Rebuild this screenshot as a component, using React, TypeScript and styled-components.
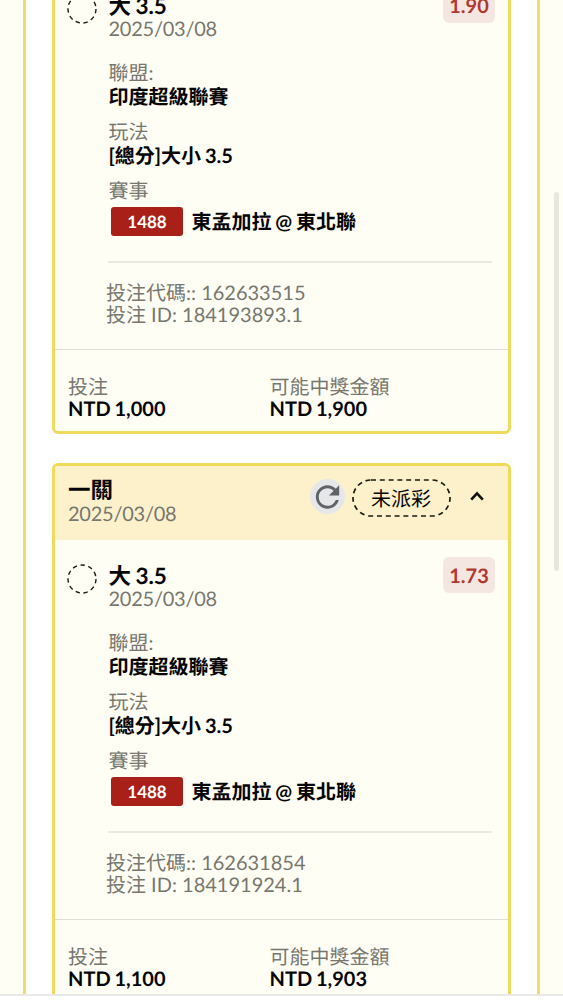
import React from "react";
import styled, { createGlobalStyle } from "styled-components";

const GlobalStyle = createGlobalStyle`
  * { box-sizing: border-box; }
  body {
    margin: 0;
    background: #fff;
    overflow: hidden;
    font-family: Lato, "Noto Sans CJK TC", sans-serif;
    font-size: 20px;
    color: #050505;
    text-rendering: geometricPrecision;
  }
`;

const Page = styled.div`
  height: 1000px;
  background: #fff;
`;

const ScrollArea = styled.main`
  position: relative;
  height: 996px;
  overflow: hidden;
  padding: 0 23px;
  background: #fffef5;
  border-bottom: 2px solid #e9e9e9;
`;

const ScrollThumb = styled.div`
  position: absolute;
  top: 192px;
  right: 4px;
  width: 5px;
  height: 379px;
  border-radius: 3px;
  background: #e7e7e0;
`;

const Frame = styled.div`
  height: 100%;
  padding: 0 26px;
  background: #fff;
  border: solid #f0dc68;
  border-width: 0 3px;
  overflow: hidden;
`;

const TicketList = styled.div`
  display: flex;
  flex-direction: column;
  gap: 29px;
  margin-top: -33px;
`;

const Ticket = styled.article`
  flex: none;
  border: 3px solid #f0da5c;
  border-radius: 6px;
  background: #fffef5;
  overflow: hidden;
`;

const TicketHeader = styled.header`
  display: flex;
  height: 74px;
  padding: 12px 24px 0 13px;
  background: #fdf1cc;
`;

const HeaderTitle = styled.div`
  flex: 1;
`;

const HeaderActions = styled.div`
  display: flex;
  align-items: center;
  height: 38px;
  margin-top: 1px;
`;

const RefreshButton = styled.button`
  display: flex;
  align-items: center;
  justify-content: center;
  width: 35px;
  height: 35px;
  padding: 0;
  margin: -3px 7px 0 0;
  border: 0;
  border-radius: 50%;
  background: #e6e7e8;
`;

const PillOutline = styled.svg`
  display: block;
`;

const StatusPill = styled.span`
  display: grid;
  width: 99px;
  height: 38px;
  > * { grid-area: 1 / 1; }
`;

const StatusText = styled.span`
  align-self: center;
  padding: 3px 1px 0 0;
  text-align: center;
  line-height: 25px;
`;

const ChevronBox = styled.span`
  display: flex;
  margin: -4px 0 0 19px;
`;

const Strong = styled.div<{ $lh?: number }>`
  font-weight: 700;
  line-height: ${(p) => p.$lh ?? 25}px;
  word-spacing: -1px;
`;

const Title = styled(Strong)`
  font-size: 22.5px;
`;

const Muted = styled.div<{ $lh?: number }>`
  color: #77776f;
  line-height: ${(p) => p.$lh ?? 24}px;
`;

const DateText = styled(Muted)`
  letter-spacing: -0.25px;
`;

const Selection = styled.section`
  display: flex;
  padding: 23px 13px 0;
`;

const PendingMark = styled.svg`
  flex: none;
  width: 30px;
  height: 30px;
  margin: 0.5px 11.5px 0 -1px;
`;

const Details = styled.div`
  flex: 1;
`;

const Odds = styled.span`
  align-self: flex-start;
  width: 52px;
  margin-top: -6px;
  padding-top: 2px;
  border-radius: 6px;
  background: #f4e6e0;
  color: #b03a30;
  font-weight: 700;
  line-height: 34px;
  text-align: center;
`;

const Field = styled.div<{ $gap: number }>`
  margin-top: ${(p) => p.$gap}px;
`;

const MatchRow = styled.div`
  display: flex;
  align-items: center;
  gap: 8.5px;
  margin: 4px 0 0 2.5px;
  white-space: nowrap;
`;

const MatchCode = styled.span`
  width: 72px;
  border-radius: 3px;
  background: #a82018;
  color: #fff;
  font-size: 17px;
  font-weight: 700;
  line-height: 29px;
  text-align: center;
`;

const Teams = styled(Strong)`
  padding-top: 2px;
`;

const Codes = styled.div`
  margin: 25px 16px 0 53px;
  padding: 19px 0 23px;
  border-top: 2px solid #e9e9e1;
  > div { margin-left: -2px; }
`;

const TicketFooter = styled.footer`
  display: grid;
  grid-template-columns: 201.5px 1fr;
  padding: 26px 13px 11px;
  border-top: 1px solid #dfdfd7;
`;

function RefreshIcon() {
  return (
    <svg width="36" height="36" viewBox="0 0 24 24" fill="#5f6368">
      <path d="M17.65 6.35C16.2 4.9 14.21 4 12 4c-4.42 0-7.99 3.58-7.99 8s3.57 8 7.99 8c3.73 0 6.84-2.55 7.73-6h-2.08c-.82 2.33-3.04 4-5.65 4-3.31 0-6-2.69-6-6s2.69-6 6-6c1.66 0 3.14.69 4.22 1.78L13 11h7V4l-2.35 2.35z" />
    </svg>
  );
}

function Chevron() {
  return (
    <svg width="14" height="10" viewBox="0 0 14 10" fill="none">
      <path d="M1.2 8.6 7 2.4l5.8 6.2" stroke="#111" strokeWidth="2.6" />
    </svg>
  );
}

type Bet = {
  odds: string;
  code: string;
  id: string;
  stake: string;
  payout: string;
  header: boolean;
};

const bets: Bet[] = [
  { odds: "1.90", code: "162633515", id: "184193893.1", stake: "1,000", payout: "1,900", header: false },
  { odds: "1.73", code: "162631854", id: "184191924.1", stake: "1,100", payout: "1,903", header: true },
];

function BetTicket({ bet }: { bet: Bet }) {
  return (
    <Ticket>
      {bet.header && (
        <TicketHeader>
          <HeaderTitle>
            <Title $lh={24}>一關</Title>
            <DateText>2025/03/08</DateText>
          </HeaderTitle>
          <HeaderActions>
            <RefreshButton><RefreshIcon /></RefreshButton>
            <StatusPill>
              <PillOutline width="99" height="38">
                <rect x="1" y="1" width="97" height="36" rx="18" fill="none" stroke="#1a1a12" strokeWidth="1.7" strokeDasharray="5 3.8" />
              </PillOutline>
              <StatusText>未派彩</StatusText>
            </StatusPill>
            <ChevronBox><Chevron /></ChevronBox>
          </HeaderActions>
        </TicketHeader>
      )}
      <Selection>
        <PendingMark viewBox="0 0 30 30">
          <circle cx="15" cy="15" r="14" fill="none" stroke="#1a1a1a" strokeWidth="1.4" strokeDasharray="4.4 3.6" />
        </PendingMark>
        <Details>
          <Title $lh={25}>大 3.5</Title>
          <DateText $lh={23}>2025/03/08</DateText>
          <Field $gap={20}>
            <Muted>聯盟:</Muted>
            <Strong>印度超級聯賽</Strong>
          </Field>
          <Field $gap={10}>
            <Muted>玩法</Muted>
            <Strong>[總分]大小 3.5</Strong>
          </Field>
          <Field $gap={10}>
            <Muted>賽事</Muted>
            <MatchRow>
              <MatchCode>1488</MatchCode>
              <Teams>東孟加拉 @ 東北聯</Teams>
            </MatchRow>
          </Field>
        </Details>
        <Odds>{bet.odds}</Odds>
      </Selection>
      <Codes>
        <Muted $lh={22}>投注代碼:: {bet.code}</Muted>
        <Muted $lh={22}>投注 ID: {bet.id}</Muted>
      </Codes>
      <TicketFooter>
        <div>
          <Muted $lh={22}>投注</Muted>
          <Strong $lh={22}>NTD {bet.stake}</Strong>
        </div>
        <div>
          <Muted $lh={22}>可能中獎金額</Muted>
          <Strong $lh={22}>NTD {bet.payout}</Strong>
        </div>
      </TicketFooter>
    </Ticket>
  );
}

export default function App() {
  return (
    <Page>
      <GlobalStyle />
      <ScrollArea>
        <Frame>
          <TicketList>
            {bets.map((bet) => (
              <BetTicket key={bet.id} bet={bet} />
            ))}
          </TicketList>
        </Frame>
        <ScrollThumb />
      </ScrollArea>
    </Page>
  );
}
